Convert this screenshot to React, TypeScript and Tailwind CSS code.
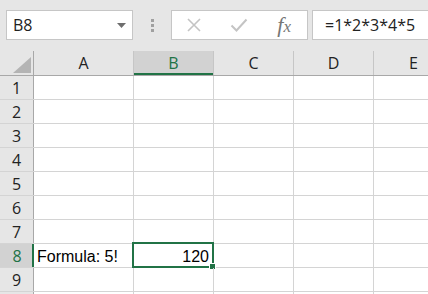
const cols = ['A', 'B', 'C', 'D', 'E'];
const colWidths = ['w-[100px]', 'w-[80px]', 'w-[80px]', 'w-[80px]', 'w-[80px]'];
const rows = [1, 2, 3, 4, 5, 6, 7, 8, 9];

const cellFont = { fontFamily: '"Liberation Sans", Arial, sans-serif' };
const uiFont = { fontFamily: '"Open Sans", "Noto Sans", sans-serif' };

function FormulaBar() {
  return (
    <div className="h-[51px] bg-[#e6e6e6] flex items-start pt-[10px] pl-[6px]" style={uiFont}>
      <div className="w-[127px] h-[30px] bg-white border border-[#c6c6c6] flex items-center justify-between pl-[6px] pr-[6px]">
        <span className="text-[16px] text-[#222] leading-none">B8</span>
        <svg width="9" height="5" viewBox="0 0 9 5">
          <path d="M0 0h9L4.5 5z" fill="#6e6e6e" />
        </svg>
      </div>
      <div className="w-[38px] h-[30px] flex flex-col items-center justify-center gap-[2px]">
        <div className="w-[3px] h-[3px] bg-[#a0a0a0]" />
        <div className="w-[3px] h-[3px] bg-[#a0a0a0]" />
        <div className="w-[3px] h-[3px] bg-[#a0a0a0]" />
      </div>
      <div className="w-[137px] h-[30px] bg-white border border-[#c6c6c6] flex items-center">
        <div className="w-[44px] flex justify-center">
          <svg width="16" height="16" viewBox="0 0 16 16">
            <path d="M2 2L14 14M14 2L2 14" stroke="#c4c4c4" strokeWidth="1.6" />
          </svg>
        </div>
        <div className="w-[46px] flex justify-center">
          <svg width="18" height="16" viewBox="0 0 18 16">
            <path d="M1.5 8.5L6.5 13.5L16.5 2.5" stroke="#c4c4c4" strokeWidth="2" fill="none" />
          </svg>
        </div>
        <div className="w-[46px] flex justify-center">
          <span
            className="text-[22px] italic text-[#767676] leading-none"
            style={{ fontFamily: '"Liberation Serif", "Times New Roman", serif' }}
          >
            f<span className="text-[17px]">x</span>
          </span>
        </div>
      </div>
      <div className="flex-1 h-[30px] bg-white border border-[#c6c6c6] border-r-0 ml-[4px] flex items-center pl-[12px]">
        <span className="text-[16px] text-[#222] leading-none">=1*2*3*4*5</span>
      </div>
    </div>
  );
}

function Sheet() {
  return (
    <div className="flex flex-col">
      <div className="flex h-[25px] bg-[#e6e6e6] border-b border-[#a8a8a8]" style={uiFont}>
        <div className="w-[34px] shrink-0 border-r border-[#a8a8a8] flex items-end justify-end pr-[2px] pb-[2px]">
          <svg width="18" height="16" viewBox="0 0 18 16">
            <path d="M18 0V16H0z" fill="#b4b4b4" />
          </svg>
        </div>
        {cols.map((c, i) => (
          <div
            key={c}
            className={`${colWidths[i]} shrink-0 flex items-center justify-center text-[16px] border-r ${
              c === 'B'
                ? 'bg-[#d2d2d2] text-[#217346] border-[#c6c6c6] shadow-[inset_0_-2px_0_#217346]'
                : 'text-[#222] border-[#c6c6c6]'
            }`}
          >
            {c}
          </div>
        ))}
      </div>
      {rows.map((r) => (
        <div key={r} className="flex h-[24px] border-b border-[#d4d4d4]">
          <div
            className={`w-[34px] shrink-0 flex items-center justify-center text-[16px] ${
              r === 8
                ? 'bg-[#d2d2d2] text-[#217346] shadow-[inset_-2px_0_0_#217346]'
                : 'bg-[#e6e6e6] text-[#222] border-r border-[#a8a8a8]'
            }`}
            style={uiFont}
          >
            {r}
          </div>
          {cols.map((c, i) => (
            <div
              key={c}
              className={`${colWidths[i]} shrink-0 relative border-r border-[#d4d4d4] flex items-center text-[16px] text-black`}
              style={cellFont}
            >
              {r === 8 && c === 'A' && <span className="pl-[3px] pt-[2px]">Formula: 5!</span>}
              {r === 8 && c === 'B' && (
                <>
                  <span className="w-full text-right pr-[4px] pt-[2px]">120</span>
                  <div className="absolute -left-[2px] -top-[2px] -right-[1px] -bottom-[1px] border-2 border-[#217346]" />
                  <div className="absolute -right-[3px] -bottom-[3px] w-[5px] h-[5px] bg-[#217346] border border-white box-content" />
                </>
              )}
            </div>
          ))}
        </div>
      ))}
      <div className="flex h-[24px]">
        <div className="w-[34px] shrink-0 bg-[#e6e6e6] border-r border-[#a8a8a8]" />
        {cols.map((c, i) => (
          <div key={c} className={`${colWidths[i]} shrink-0 border-r border-[#d4d4d4]`} />
        ))}
      </div>
    </div>
  );
}

export default function App() {
  return (
    <div className="w-[428px] h-[294px] overflow-hidden bg-white">
      <FormulaBar />
      <Sheet />
    </div>
  );
}
